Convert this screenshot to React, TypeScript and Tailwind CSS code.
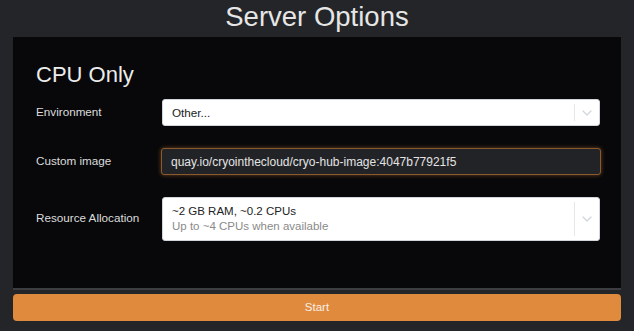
import React from 'react';

// Chevron used by the select boxes
const Chevron = () => (
  <svg width="10" height="6" viewBox="0 0 10 6" fill="none" className="text-gray-300">
    <path d="M1 1l4 4 4-4" stroke="currentColor" strokeWidth="1.2" strokeLinecap="round" strokeLinejoin="round" />
  </svg>
);

const SelectBox = ({ children, tall }: { children: React.ReactNode; tall?: boolean }) => (
  <div
    className={`flex w-[438px] shrink-0 items-stretch rounded-[3px] border border-gray-300 bg-white ${tall ? 'h-[44px]' : 'h-[27px]'}`}
  >
    <div className="flex flex-1 flex-col justify-center px-[9px]">{children}</div>
    <div className="my-[4px] w-px bg-gray-200" />
    <div className="flex w-[24px] items-center justify-center">
      <Chevron />
    </div>
  </div>
);

export default function App() {
  return (
    <div
      className="flex h-[331px] w-[634px] flex-col bg-[#232528] px-[13px]"
      style={{ fontFamily: '"Liberation Sans", Arial, sans-serif' }}
    >
      <h1 className="flex h-[37px] items-center justify-center pb-[4px] text-[27.5px] text-[#e6e6e6]">
        Server Options
      </h1>

      <div className="h-[251px] bg-[#08080a] pl-[23px] pr-[20px] pt-[25px]">
        <h2 className="text-[22px] leading-[26px] text-[#ececec]">CPU Only</h2>

        <div className="mt-[11px] flex items-center">
          <div className="w-[126px] shrink-0 self-start pt-[4px] text-[11.7px] text-[#dcdcdc]">Environment</div>
          <SelectBox>
            <span className="text-[11.7px] text-[#222]">Other...</span>
          </SelectBox>
        </div>

        <div className="mt-[22px] flex items-center">
          <div className="w-[125px] shrink-0 self-start pt-[4px] text-[11.7px] text-[#dcdcdc]">Custom image</div>
          <div className="flex h-[27px] w-[440px] shrink-0 items-center rounded-[3px] border border-[#8a5a2e] bg-[#222326] px-[9px] text-[12px] text-[#e4e4e4] shadow-[0_0_4px_rgba(224,137,61,0.45)]">
            quay.io/cryointhecloud/cryo-hub-image:4047b77921f5
          </div>
        </div>

        <div className="mt-[22px] flex items-center">
          <div className="w-[126px] shrink-0 self-start pt-[12px] text-[11.7px] text-[#dcdcdc]">Resource Allocation</div>
          <SelectBox tall>
            <span className="text-[11.5px] leading-[15px] text-[#222]">~2 GB RAM, ~0.2 CPUs</span>
            <span className="text-[11.5px] leading-[15px] text-[#8a8a8a]">Up to ~4 CPUs when available</span>
          </SelectBox>
        </div>
      </div>

      <div className="h-[2px] bg-[#3b3d41]" />

      <button className="mt-[4px] h-[27px] w-full rounded-[4px] bg-[#e08a3e] text-[11.5px] text-[#f8efe6]">
        Start
      </button>
    </div>
  );
}
